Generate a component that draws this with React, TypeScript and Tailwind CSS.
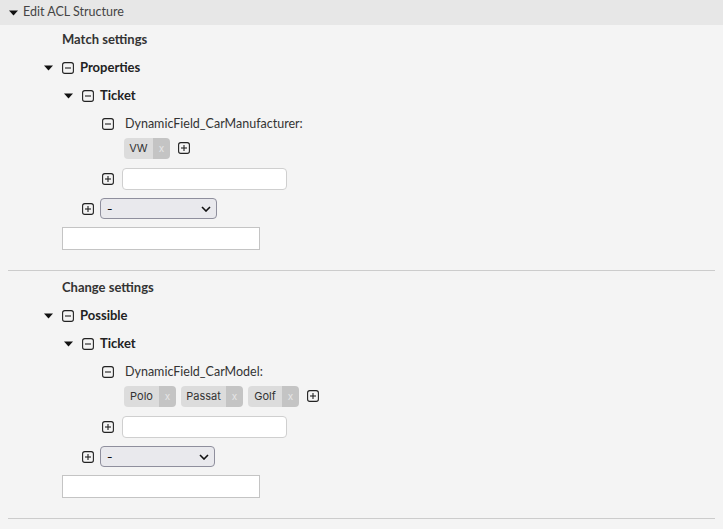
import React from 'react';

const font = { fontFamily: 'Lato, "Noto Sans", sans-serif' };

const Caret = () => (
  <svg width="9" height="6" viewBox="0 0 9 6" className="shrink-0">
    <path d="M0 0.5 L9 0.5 L4.5 5.5 Z" fill="#111" />
  </svg>
);

const BoxIcon = ({ plus }: { plus?: boolean }) => (
  <svg width="12" height="12" viewBox="0 0 12 12" className="shrink-0">
    <rect x="0.6" y="0.6" width="10.8" height="10.8" rx="2.2" fill="none" stroke="#222" strokeWidth="1.1" />
    <path d="M3 6 H9" stroke="#222" strokeWidth="1.1" />
    {plus && <path d="M6 3 V9" stroke="#222" strokeWidth="1.1" />}
  </svg>
);

const Tag = ({ label, w }: { label: string; w: string }) => (
  <div className="flex h-[21px] overflow-hidden rounded-[4px] text-[11px] text-[#333]" style={{ fontFamily: 'Inter, sans-serif' }}>
    <span className={`flex items-center justify-center bg-[#dcdcdc] ${w}`}>{label}</span>
    <span className="flex w-[17px] items-center justify-center bg-[#c4c4c4] text-[10px] text-[#e6e6e6]">x</span>
  </div>
);

const Select = ({ w }: { w: string }) => (
  <div className={`flex h-[21px] items-center justify-between rounded-[4px] border border-[#8f8f9d] bg-[#e9e9ed] pl-[6px] pr-[5px] text-[12px] text-[#111] ${w}`}
    style={{ fontFamily: 'Inter, sans-serif' }}>
    <span>-</span>
    <svg width="10" height="6" viewBox="0 0 10 6">
      <path d="M1 1 L5 5 L9 1" fill="none" stroke="#111" strokeWidth="1.6" />
    </svg>
  </div>
);

type Section = {
  title: string;
  group: string;
  field: string;
  tags: { label: string; w: string }[];
  selectW: string;
};

const sections: Section[] = [
  {
    title: 'Match settings',
    group: 'Properties',
    field: 'DynamicField_CarManufacturer:',
    tags: [{ label: 'VW', w: 'w-[29px]' }],
    selectW: 'w-[117px]',
  },
  {
    title: 'Change settings',
    group: 'Possible',
    field: 'DynamicField_CarModel:',
    tags: [
      { label: 'Polo', w: 'w-[35px]' },
      { label: 'Passat', w: 'w-[45px]' },
      { label: 'Golf', w: 'w-[34px]' },
    ],
    selectW: 'w-[115px]',
  },
];

export default function App() {
  return (
    <div className="min-h-[529px] w-[723px] bg-[#f4f4f4] text-[13px] text-[#222]" style={font}>
      <div className="flex h-[25px] items-center gap-[5px] bg-[#e7e7e7] pl-[9px] text-[12.5px] text-[#444]">
        <Caret />
        <span>Edit ACL Structure</span>
      </div>

      {sections.map((s, i) => (
        <div key={s.title} className={`mx-[8px] border-b border-[#cccccc] pb-[20px] ${i > 0 ? 'pt-[2px]' : ''}`}>
          <div className="flex h-[28px] items-center pl-[54px] pt-[2px] font-bold text-[#333]">{s.title}</div>

          <div className="flex h-[28px] items-center pl-[36px] pt-[2px] font-bold">
            <Caret />
            <span className="ml-[9px]"><BoxIcon /></span>
            <span className="ml-[6px]">{s.group}</span>
          </div>

          <div className="flex h-[28px] items-center pl-[56px] pt-[2px] font-bold">
            <Caret />
            <span className="ml-[9px]"><BoxIcon /></span>
            <span className="ml-[6px]">Ticket</span>
          </div>

          <div className="flex h-[28px] items-center pl-[94px] pt-[2px]">
            <BoxIcon />
            <span className="ml-[11px] text-[12.5px] text-[#333]">{s.field}</span>
          </div>

          <div className="flex h-[22px] items-center pl-[116px]">
            <div className="flex gap-[5px]">
              {s.tags.map(t => <Tag key={t.label} label={t.label} w={t.w} />)}
            </div>
            <span className="ml-[8px]"><BoxIcon plus /></span>
          </div>

          <div className="mt-[9px] flex h-[22px] items-center pl-[94px]">
            <BoxIcon plus />
            <div className="ml-[8px] h-[22px] w-[165px] rounded-[4px] border border-[#cfcfcf] bg-white" />
          </div>

          <div className="mt-[8px] flex items-center pl-[74px]">
            <BoxIcon plus />
            <div className="ml-[6px]"><Select w={s.selectW} /></div>
          </div>

          <div className="ml-[54px] mt-[8px] h-[23px] w-[198px] border border-[#c4c4c4] bg-white" />
        </div>
      ))}
    </div>
  );
}
